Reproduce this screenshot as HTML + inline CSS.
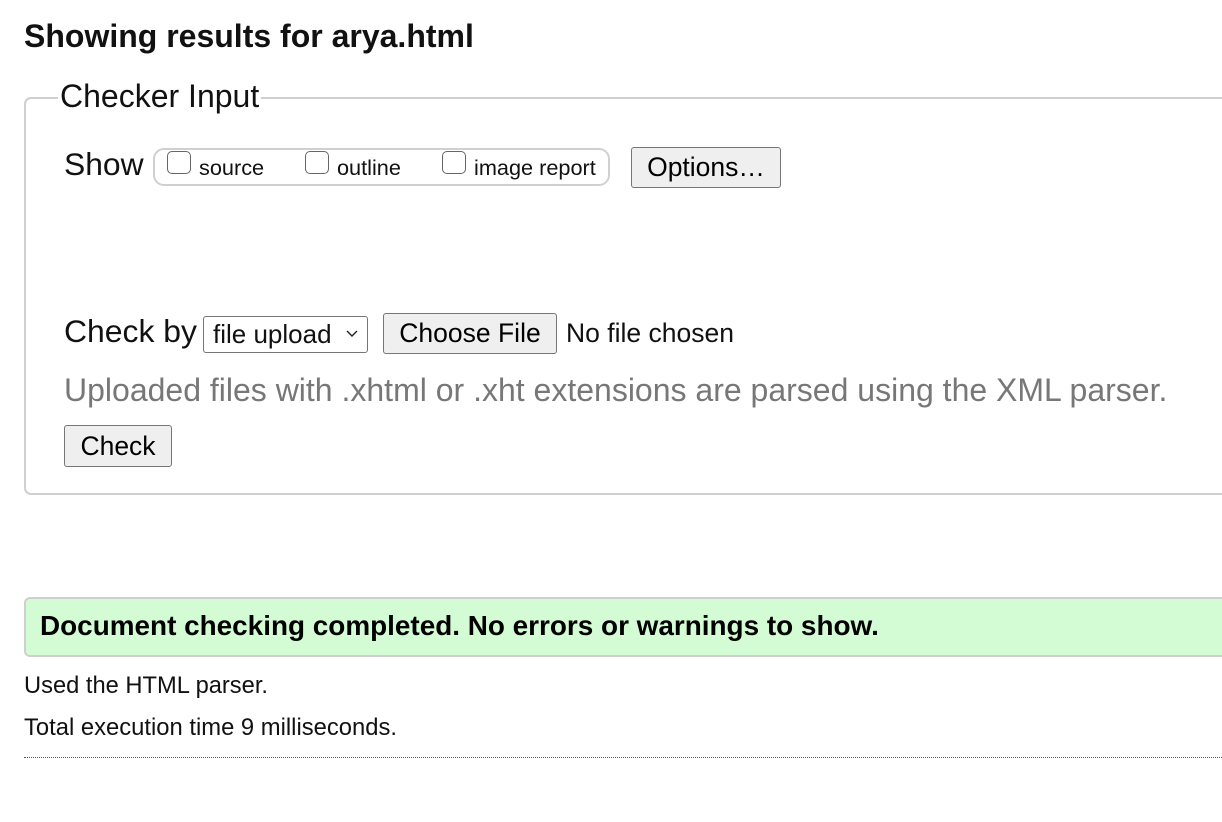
<!DOCTYPE html>
<html><head><meta charset="utf-8"><style>
body{margin:0;width:1222px;height:822px;overflow:hidden;background:#fff;font-family:"Liberation Sans",Arial,sans-serif;color:#111;position:relative}
.a{position:absolute;white-space:nowrap}
.btn{position:absolute;background:#efefef;border:1px solid #767676;border-radius:3px;box-sizing:border-box;display:flex;align-items:center;justify-content:center;font-size:26.5px;color:#000}
.cb{position:absolute;width:24px;height:23px;border:1.5px solid #666;border-radius:5px;box-sizing:border-box;background:#fff}
</style></head><body>
<div class="a" style="left:24px;top:18px;font-size:32px;font-weight:bold">Showing results for arya.html</div>
<div class="a" style="left:24px;top:97px;width:1220px;height:398px;border:2px solid #d0d0d0;border-radius:7px;box-sizing:border-box"></div>
<div class="a" style="left:58px;top:78px;font-size:32px;background:#fff;padding:0 2px">Checker Input</div>
<div class="a" style="left:64px;top:146px;font-size:31.8px">Show</div>
<div class="a" style="left:153px;top:148px;width:457px;height:38px;border:2px solid #d0d0d0;border-radius:11px;box-sizing:border-box"></div>
<div class="cb" style="left:167px;top:151px"></div><div class="a" style="left:199px;top:155px;font-size:21.7px">source</div>
<div class="cb" style="left:305px;top:151px"></div><div class="a" style="left:337px;top:155px;font-size:21.7px">outline</div>
<div class="cb" style="left:442px;top:151px"></div><div class="a" style="left:474px;top:155px;font-size:21.7px">image report</div>
<div class="btn" style="left:631px;top:147px;width:150px;height:41px">Options…</div>
<div class="a" style="left:64px;top:313px;font-size:31.9px">Check by</div>
<div class="a" style="left:203px;top:316px;width:165px;height:37px;border:1px solid #767676;border-radius:3px;box-sizing:border-box;font-size:26px;padding:2px 0 0 9px">file upload<svg style="position:absolute;right:9px;top:13px" width="12" height="8" viewBox="0 0 12 8"><path d="M1 1L6 6L11 1" fill="none" stroke="#222" stroke-width="1.4"/></svg></div>
<div class="btn" style="left:383px;top:313px;width:174px;height:41px">Choose File</div>
<div class="a" style="left:566px;top:318px;font-size:26.5px">No file chosen</div>
<div class="a" style="left:64px;top:372px;font-size:32px;color:#777">Uploaded files with .xhtml or .xht extensions are parsed using the XML parser.</div>
<div class="btn" style="left:64px;top:425px;width:108px;height:42px">Check</div>
<div class="a" style="left:24px;top:597px;width:1220px;height:60px;background:#d4fcd4;border:2px solid #cfcfcf;border-radius:6px;box-sizing:border-box"></div>
<div class="a" style="left:40px;top:610px;font-size:27.9px;font-weight:bold;color:#000">Document checking completed. No errors or warnings to show.</div>
<div class="a" style="left:24px;top:673px;font-size:23.7px">Used the HTML parser.</div>
<div class="a" style="left:24px;top:714px;font-size:23.8px">Total execution time 9 milliseconds.</div>
<div class="a" style="left:24px;top:757px;width:1200px;border-top:1px dotted #555"></div>
</body></html>
